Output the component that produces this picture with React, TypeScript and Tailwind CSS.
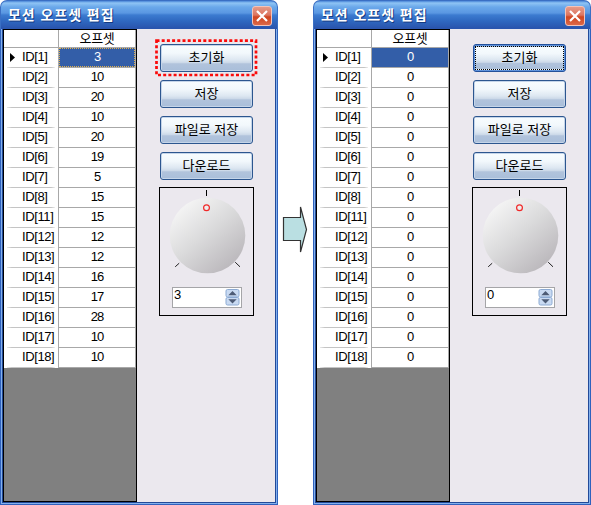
import React from "react";

const IDS = [1, 2, 3, 4, 5, 6, 7, 8, 11, 12, 13, 14, 15, 16, 17, 18];
const BEFORE = [3, 10, 20, 10, 20, 19, 5, 15, 15, 12, 12, 16, 17, 28, 10, 10];
const AFTER = IDS.map(() => 0);
const BUTTONS = ["초기화", "저장", "파일로 저장", "다운로드"];

function TitleBar() {
  return (
    <div className="flex h-[29px] shrink-0 items-center justify-between rounded-t-[7px] border-x border-t border-[#3a6fc4] bg-[linear-gradient(180deg,#4a86d8_0px,#8fc4f4_2px,#6aa8ea_6px,#5a97e2_12px,#3c7bd0_14px,#2f68c0_20px,#2a55ae_27px)] pr-[5px] pl-[7px]">
      <span className="text-[14px] leading-[16px] font-bold tracking-[0.95px] whitespace-nowrap text-white [text-shadow:1px_1px_0_#153a80]">
        모션 오프셋 편집
      </span>
      <span className="mt-[2px] flex h-5 w-5 items-center justify-center rounded-[3px] border border-[#f4c3b8] bg-[linear-gradient(180deg,#e69a88_0%,#dc7560_45%,#cf4520_55%,#dc6848_100%)]">
        <svg width="12" height="12" viewBox="0 0 12 12" fill="none" stroke="#fff" strokeWidth="2.2">
          <path d="M1 1L11 11M11 1L1 11" />
        </svg>
      </span>
    </div>
  );
}

function OffsetGrid({ values, focused }: { values: number[]; focused: boolean }) {
  return (
    <div className="flex w-[134px] shrink-0 flex-col border border-black bg-[#808080]">
      <div className="flex h-[18px] bg-white">
        <div className="w-[54px] border-b border-[#a8a8a8]" />
        <div className="flex w-[78px] items-center justify-center border-x border-b border-[#a8a8a8] text-[13px] leading-[16px] tracking-[-0.3px]">
          오프셋
        </div>
      </div>
      {IDS.map((id, i) => (
        <div key={id} className="flex h-5 bg-white">
          <div className="flex w-[54px] flex-col px-[3px]">
            <div className="flex h-[19px] items-center">
              <span className="flex w-[15px] pl-[3px]">
                {i === 0 && (
                  <svg width="5" height="9" viewBox="0 0 5 9">
                    <path d="M0 0L5 4.5L0 9Z" fill="#000" />
                  </svg>
                )}
              </span>
              <span className="text-[13px] leading-[17px] tracking-[-0.4px] whitespace-nowrap pb-[2px]">ID[{id}]</span>
            </div>
            <div className="h-px bg-[linear-gradient(90deg,#e8e8e8,#c4c4c4_10%,#c4c4c4_92%,#eee)]" />
          </div>
          <div className="w-[78px] border-x border-b border-[#a8a8a8]">
            <div
              className={
                "flex h-[19px] items-center justify-center text-[13px] tracking-[-1.1px] " +
                (i === 0
                  ? focused
                    ? "border border-dotted border-[#e2b24f] bg-[#335ea8] text-white"
                    : "bg-[#335ea8] text-white"
                  : "bg-white")
              }
            >
              <span className="pb-[2px] leading-[17px]">{values[i]}</span>
            </div>
          </div>
        </div>
      ))}
    </div>
  );
}

function PushButton({ label, selected }: { label: string; selected: boolean }) {
  return (
    <button
      className={
        "flex h-7 w-[93px] items-center justify-center rounded-[3px] border p-px " +
        (selected ? "border-[#23509a] bg-[#5f93dc]" : "border-[#2c568f] bg-[#c5d5e9]")
      }
    >
      <span
        className={
          "flex h-full w-full items-center justify-center bg-[linear-gradient(180deg,#f7fcfe_0%,#f2f8fc_30%,#dde7f1_58%,#cbd8e8_70%,#b1c3dc_74%,#aabfda_100%)] text-[13px] leading-[16px] whitespace-nowrap " +
          (selected ? "border border-dotted border-black" : "")
        }
      >
        {label}
      </span>
    </button>
  );
}

function Dial({ value }: { value: number }) {
  return (
    <div className="mt-[7px] -ml-px flex h-[129px] w-[95px] flex-col border border-black">
      <svg width="93" height="99" viewBox="160 188 93 99" className="shrink-0">
        <defs>
          <linearGradient id={"knob" + value} x1="0.12" y1="0.1" x2="0.8" y2="0.9">
            <stop offset="0" stopColor="#f6f6f6" />
            <stop offset="0.5" stopColor="#dadadb" />
            <stop offset="1" stopColor="#bcb9bd" />
          </linearGradient>
        </defs>
        <circle cx="207.5" cy="235.5" r="37.8" fill={"url(#knob" + value + ")"} />
        <path d="M206.5 190V196" stroke="#000" />
        <path d="M175.2 266.8L179.2 263.2M235.2 262.2L240 266.8" stroke="#222" />
        <circle cx="206.5" cy="207.7" r="2.9" fill="#eee" stroke="#f02828" strokeWidth="1.2" />
      </svg>
      <div className="ml-3 flex h-[21px] w-[70px] justify-between border border-[#a5a5a8] bg-white pr-px pl-px">
        <span className="text-[13px] leading-[13px]">{value}</span>
        <svg width="15" height="17" viewBox="0 0 15 17" className="mt-px">
          <rect x="1" y="0.5" width="13" height="7.5" rx="1.5" fill="#c9daf2" stroke="#8caad3" />
          <rect x="1" y="8.5" width="13" height="7.5" rx="1.5" fill="#c9daf2" stroke="#8caad3" />
          <path d="M3.3 6.2L7.5 2L11.7 6.2ZM3.3 10.2H11.7L7.5 14.4Z" fill="#4d5b75" />
        </svg>
      </div>
    </div>
  );
}

function EditorWindow({ values, highlighted }: { values: number[]; highlighted: boolean }) {
  return (
    <section className="flex h-[505px] w-[278px] shrink-0 flex-col">
      <TitleBar />
      <div className="flex grow border-x border-b border-[#2f61bd]">
        <div className="flex grow border-x border-b border-[#82b0ec]">
          <div className="flex grow border-x border-b border-[#234a98] bg-[#ebe8ee]">
            <OffsetGrid values={values} focused={highlighted} />
            <div className="ml-[23px] flex flex-col">
              <div className="relative mt-[15px] flex flex-col gap-2">
                {BUTTONS.map((label, i) => (
                  <PushButton key={label} label={label} selected={i === 0 && !highlighted} />
                ))}
                {highlighted && (
                  <svg className="absolute -top-[6px] -left-[6px]" width="104" height="40" viewBox="0 0 104 40">
                    <rect x="2.5" y="2.7" width="99.5" height="34.3" fill="none" stroke="#fa0a0a" strokeWidth="2.7" strokeDasharray="3 2.2" />
                  </svg>
                )}
              </div>
              <Dial value={values[0]} />
            </div>
          </div>
        </div>
      </div>
    </section>
  );
}

export default function App() {
  return (
    <main className="flex h-[505px] w-[591px] overflow-hidden bg-white font-['Liberation_Sans','Noto_Sans_CJK_KR',sans-serif] text-black">
      <EditorWindow values={BEFORE} highlighted />
      <div className="flex w-[35px] shrink-0 justify-center">
        <svg width="27" height="50" viewBox="282 204 27 50" className="mt-[204px]">
          <path d="M283.5 217.5H300.5V207L306.5 229.5L300.5 252V240.5H283.5Z" fill="#badfe2" stroke="#333" strokeWidth="1.2" />
        </svg>
      </div>
      <EditorWindow values={AFTER} highlighted={false} />
    </main>
  );
}
